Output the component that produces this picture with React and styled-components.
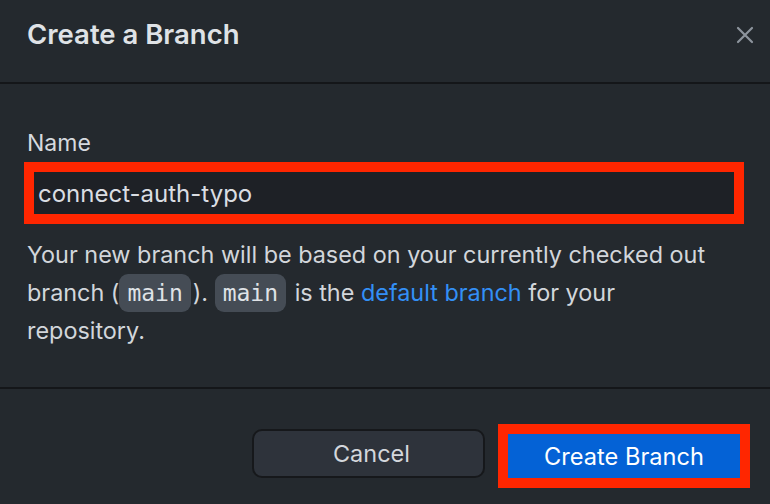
import React from "react";
import styled, { createGlobalStyle } from "styled-components";

const Global = createGlobalStyle`
  html, body { margin: 0; padding: 0; background: #24292e; }
  body { font-family: Inter, "Noto Sans", "Liberation Sans", sans-serif; -webkit-font-smoothing: antialiased; }
  * { box-sizing: border-box; }
`;

const Dialog = styled.div`
  width: 770px;
  height: 504px;
  background: #24292e;
  display: flex;
  flex-direction: column;
  overflow: hidden;
`;

const Header = styled.div`
  height: 84px;
  flex: none;
  display: flex;
  justify-content: space-between;
  align-items: flex-start;
  padding: 18px 16px 0 27px;
  border-bottom: 2px solid #141619;
`;

const Title = styled.h1`
  margin: 0;
  font-size: 27.5px;
  line-height: 32px;
  font-weight: 600;
  color: #dfe2e6;
`;

const Close = styled.button`
  background: none;
  border: none;
  padding: 0;
  margin-top: 8px;
  width: 18px;
  height: 18px;
  display: flex;
  color: #8d949d;
`;

const Body = styled.div`
  flex: none;
  height: 305px;
  padding: 45px 27px 0 27px;
  border-bottom: 2px solid #141619;
`;

const Label = styled.label`
  display: block;
  font-size: 23px;
  line-height: 28px;
  color: #d6dadf;
  margin-bottom: 15px;
`;

const Input = styled.div`
  margin: 0 9px 0 7px;
  height: 42px;
  background: #1e2126;
  outline: 10px solid #ff2600;
  display: flex;
  align-items: center;
  padding-left: 4px;
  font-size: 24px;
  color: #dadde2;
`;

const Para = styled.p`
  margin: 22px 12px 0 0;
  font-size: 23.4px;
  line-height: 37.5px;
  color: #d2d6db;
`;

const Code = styled.code`
  display: inline-block;
  font-family: "DejaVu Sans Mono", "Liberation Mono", monospace;
  font-size: 23px;
  line-height: 38px;
  padding: 0 8px;
  border-radius: 9px;
  background: #454c55;
  color: #dfe2e6;
  vertical-align: middle;
  margin: -2px 2px 0 0;
`;

const Link = styled.a`
  color: #338ff6;
  text-decoration: none;
`;

const Footer = styled.div`
  flex: 1;
  display: flex;
  justify-content: flex-end;
  align-items: flex-start;
  gap: 23px;
  padding: 40px 30px 0 0;
`;

const Button = styled.button`
  font-family: inherit;
  font-size: ${(p) => (p.$primary ? "23.6px" : "23.5px")};
  cursor: pointer;
  width: ${(p) => (p.$primary ? "232px" : "233px")};
  height: ${(p) => (p.$primary ? "44px" : "49px")};
  margin-top: ${(p) => (p.$primary ? "5px" : "0")};
  padding: ${(p) => (p.$primary ? "0" : "0 0 0 6px")};
  border-radius: ${(p) => (p.$primary ? "0" : "10px")};
  background: ${(p) => (p.$primary ? "#0462d6" : "#2e333b")};
  color: ${(p) => (p.$primary ? "#ffffff" : "#d3d7dc")};
  border: ${(p) => (p.$primary ? "none" : "2px solid #16181b")};
  outline: ${(p) => (p.$primary ? "10px solid #ff2600" : "none")};
`;

export default function App() {
  return (
    <>
      <Global />
      <Dialog>
        <Header>
          <Title>Create a Branch</Title>
          <Close aria-label="Close">
            <svg width="18" height="18" viewBox="0 0 18 18">
              <path d="M2 2 L16 16 M16 2 L2 16" stroke="currentColor" strokeWidth="2.2" strokeLinecap="round" />
            </svg>
          </Close>
        </Header>
        <Body>
          <Label>Name</Label>
          <Input>connect-auth-typo</Input>
          <Para>
            Your new branch will be based on your currently checked out branch (<Code>main</Code>).{" "}
            <Code>main</Code> is the <Link href="#">default branch</Link> for your repository.
          </Para>
        </Body>
        <Footer>
          <Button>Cancel</Button>
          <Button $primary>Create Branch</Button>
        </Footer>
      </Dialog>
    </>
  );
}
